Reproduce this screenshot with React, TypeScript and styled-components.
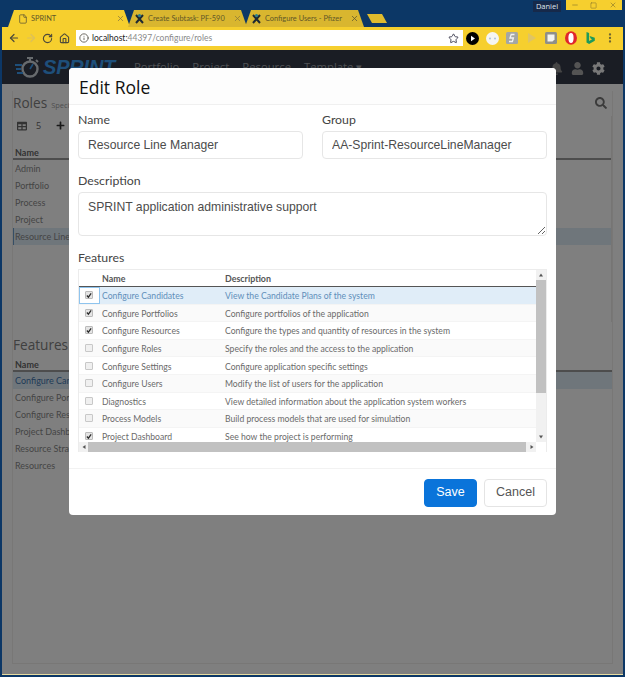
import { Fragment } from "react";
import styled, { createGlobalStyle } from "styled-components";
import {
  ArrowLeft,
  ArrowRight,
  File,
  House,
  Info,
  Minus,
  MoreVertical,
  RotateCw,
  Square,
  Star,
  X,
} from "lucide-react";
import { FaBell, FaCog, FaPlus, FaSearch, FaTable, FaUser } from "react-icons/fa";

const GlobalStyle = createGlobalStyle`
  html, body {
    margin: 0;
    padding: 0;
    background: #0c3766;
  }

  * {
    box-sizing: border-box;
  }
`;

const uiFont = `"Open Sans", "Noto Sans", sans-serif`;
const textFont = `Lato, "Open Sans", sans-serif`;
const formFont = `"Liberation Sans", Arial, sans-serif`;
const yellow = "#f6cf2e";

const Frame = styled.div`
  width: 625px;
  height: 677px;
  padding: 0 2px 2px;
  background: #0c3766;
  display: flex;
  flex-direction: column;
  font-family: ${uiFont};
  overflow: hidden;
`;

const TabStrip = styled.div`
  height: 27px;
  display: flex;
  align-items: flex-end;
  padding-left: 6px;
  flex-shrink: 0;
`;

const Tab = styled.div<{ $active?: boolean }>`
  width: ${({ $active }) => ($active ? 122 : 119)}px;
  height: 17px;
  margin-right: -2px;
  padding: 0 5px 0 ${({ $active }) => ($active ? 10 : 6)}px;
  display: flex;
  align-items: center;
  gap: 3px;
  background: ${({ $active }) => ($active ? yellow : "#d9b62f")};
  color: #625628;
  font-family: ${textFont};
  font-size: 7.4px;
  white-space: nowrap;
  clip-path: polygon(6px 0, calc(100% - 6px) 0, 100% 100%, 0 100%);

  svg {
    flex-shrink: 0;
  }
`;

const TabTitle = styled.span`
  flex: 1;
`;

const NewTab = styled.div`
  width: 20px;
  height: 9px;
  margin: 0 0 4px 5px;
  background: #e0bb2d;
  clip-path: polygon(0 0, 75% 0, 100% 100%, 25% 100%);
`;

const WindowArea = styled.div`
  margin-left: auto;
  align-self: flex-start;
  display: flex;
  gap: 5px;
  align-items: flex-start;
`;

const UserBadge = styled.div`
  width: 28px;
  height: 11px;
  margin-top: 1px;
  background: #16294a;
  color: #dfe4ea;
  font-size: 7.5px;
  line-height: 11px;
  text-align: center;
`;

const WindowButtons = styled.div`
  width: 56px;
  height: 10px;
  margin-right: 1px;
  display: grid;
  grid-template-columns: 1fr 1fr 1fr;
  background: ${yellow};
  color: #8d7a2c;
  place-items: center;
`;

const Toolbar = styled.div`
  height: 23px;
  padding: 3px 0 4px 3px;
  display: flex;
  align-items: center;
  background: ${yellow};
  flex-shrink: 0;
`;

const NavButton = styled.div<{ $faded?: boolean }>`
  width: 17px;
  display: flex;
  justify-content: center;
  color: ${({ $faded }) => ($faded ? "#dcc05a" : "#4d4a3a")};
`;

const Omnibox = styled.div`
  width: 387px;
  height: 16px;
  margin-left: 3px;
  padding: 0 4px 0 3px;
  display: flex;
  align-items: center;
  gap: 3px;
  background: #fff;
  color: #55524a;
  font-family: ${textFont};
  font-size: 8.5px;
`;

const Host = styled.span`
  color: #222;
`;

const UrlRest = styled.span`
  flex: 1;
  color: #8a8a8a;
`;

const Extensions = styled.div`
  display: flex;
  align-items: center;
`;

const Extension = styled.div`
  width: 19.6px;
  display: flex;
  justify-content: center;
  align-items: center;
`;

const AppArea = styled.div`
  position: relative;
  flex: 1;
  display: flex;
  flex-direction: column;
  background: #fff;
  border-bottom: 1px solid #e8dca0;
`;

const AppNav = styled.div`
  height: 34px;
  padding: 0 18px 0 13px;
  display: flex;
  align-items: flex-start;
  background: #343a48;
  flex-shrink: 0;
`;

const Logo = styled.div`
  display: flex;
  align-items: center;
  gap: 3px;
  height: 34px;
  width: 119px;
`;

const LogoText = styled.span`
  font-family: ${formFont};
  font-size: 20px;
  font-weight: 700;
  font-style: italic;
  letter-spacing: -0.2px;
  color: #3c9ef5;
`;

const NavLinks = styled.div`
  display: flex;
  gap: 13px;
  padding-top: 9px;
  color: #9ea2a8;
  font-size: 11.3px;
`;

const NavIcons = styled.div`
  margin-left: auto;
  padding-top: 12px;
  display: flex;
  gap: 8px;
`;

const NavIcon = styled.span<{ $tone: string }>`
  display: flex;
  color: ${({ $tone }) => $tone};
`;

const PageBody = styled.div`
  flex: 1;
  padding: 7px 10px 10px;
  display: flex;
`;

const OuterPanel = styled.div`
  flex: 1;
  border: 1px solid #f0efec;
  border-top: 0;
  color: #8a8a8a;
`;

const PageHeading = styled.div`
  height: 23px;
  display: flex;
  align-items: center;
  gap: 4px;
  color: #808080;
  font-size: 13.6px;
`;

const HeadingNote = styled.span`
  font-size: 7.5px;
  padding-top: 5px;
  color: #a0a0a0;
`;

const SearchMark = styled.span`
  margin-left: auto;
  margin-right: 5px;
  display: flex;
  color: #777;
`;

const GridTools = styled.div`
  height: 19px;
  margin-top: 2px;
  padding-left: 4px;
  display: flex;
  align-items: center;
  gap: 9px;
  color: #666;
  font-size: 9px;
`;

const PlusTool = styled.span`
  display: flex;
  margin-left: 6px;
  color: #333;
`;

const SectionBox = styled.div`
  height: 206px;
  border-right: 1px solid #ecebe8;
`;

const GridHeader = styled.div<{ $height: number }>`
  height: ${({ $height }) => $height}px;
  padding: 0 2px;
  display: flex;
  align-items: flex-end;
  border-bottom: 2px solid #9a9a9a;
  color: #666;
  font-family: ${textFont};
  font-size: 9px;
  font-weight: 700;
`;

const GridRow = styled.div<{ $selected?: boolean; $outlined?: boolean }>`
  height: 17px;
  padding: 0 2px;
  display: flex;
  align-items: center;
  font-family: ${textFont};
  font-size: 9px;
  background: ${({ $selected }) => ($selected ? "#dfecf7" : "transparent")};
  color: ${({ $selected, $outlined }) => ($selected && !$outlined ? "#4176ae" : "#8a8a8a")};
  box-shadow: ${({ $outlined }) => ($outlined ? "inset 1px 0 0 #6c9ccb" : "none")};
`;

const FeaturesHeading = styled(PageHeading)`
  margin-top: 11px;
`;

const Backdrop = styled.div`
  position: absolute;
  inset: 0;
  padding-top: 18px;
  display: flex;
  justify-content: center;
  align-items: flex-start;
  background: rgba(0, 0, 0, 0.5);
`;

const Modal = styled.div`
  width: 487px;
  height: 447px;
  display: flex;
  flex-direction: column;
  background: #fff;
  border-radius: 4px;
`;

const ModalHeader = styled.div`
  height: 37px;
  padding: 1px 10px 0;
  display: flex;
  align-items: center;
  background: #fdfdfd;
  border-bottom: 1px solid #f0f0f0;
  border-radius: 4px 4px 0 0;
  color: #111;
  font-size: 17.5px;
  font-weight: 500;
`;

const ModalBody = styled.div`
  flex: 1;
  padding: 6px 9px 0;
  display: flex;
  flex-direction: column;
  gap: 13px;
`;

const FieldRow = styled.div`
  display: grid;
  grid-template-columns: 225px 225px;
  gap: 19px;
`;

const Field = styled.div`
  display: flex;
  flex-direction: column;
`;

const Label = styled.label`
  height: 18px;
  margin-bottom: 2px;
  color: #444;
  font-family: ${textFont};
  font-size: 12.3px;
  line-height: 18px;
`;

const TextInput = styled.input`
  width: 100%;
  height: 28px;
  padding: 0 9px;
  border: 1px solid #e6e6e6;
  border-radius: 4px;
  outline: none;
  background: #fff;
  color: #4c4c4c;
  font-family: ${formFont};
  font-size: 12.2px;
`;

const TextArea = styled.textarea`
  display: block;
  width: 100%;
  height: 44px;
  padding: 7px 9px;
  border: 1px solid #e6e6e6;
  border-radius: 4px;
  outline: none;
  background: #fff;
  color: #4c4c4c;
  font-family: ${formFont};
  font-size: 12.2px;
  line-height: 15px;
  resize: vertical;
`;

const TableFrame = styled.div`
  height: 183px;
  display: grid;
  grid-template-columns: 1fr 10px;
  grid-template-rows: 172px 10px;
  border: 1px solid #ececec;
`;

const TableViewport = styled.div`
  overflow: hidden;
`;

const FeatureGrid = styled.div`
  display: grid;
  grid-template-columns: 21px 125px 1fr;
`;

const HeaderCell = styled.div<{ $inset?: boolean }>`
  height: 17px;
  padding: 1px 0 0 ${({ $inset }) => ($inset ? 2 : 0)}px;
  display: flex;
  align-items: center;
  border-bottom: 1.5px solid #555;
  color: #555;
  font-family: ${textFont};
  font-size: 8.9px;
  font-weight: 700;
`;

const Cell = styled.div<{ $selected?: boolean; $striped?: boolean; $inset?: boolean }>`
  height: 17.6px;
  padding: 1px 0 0 ${({ $inset }) => ($inset ? 2 : 0)}px;
  display: flex;
  align-items: center;
  border-bottom: 1px solid #f4f4f4;
  background: ${({ $selected, $striped }) => ($selected ? "#e0edf8" : $striped ? "#fafafa" : "#fff")};
  color: ${({ $selected }) => ($selected ? "#5f8fba" : "#6a6a6a")};
  font-family: ${textFont};
  font-size: 8.65px;
  white-space: nowrap;
`;

const CheckCell = styled(Cell)<{ $focused?: boolean }>`
  justify-content: center;
  padding: 0 1px 0 0;
  background: ${({ $focused, $striped }) => ($focused ? "#fff" : $striped ? "#fafafa" : "#fff")};
  box-shadow: ${({ $focused }) => ($focused ? "inset 0 0 0 1px #8fc4ee" : "none")};
`;

const CheckBox = styled.span<{ $checked?: boolean }>`
  width: 8px;
  height: 8px;
  display: flex;
  align-items: center;
  justify-content: center;
  border: 1px solid ${({ $checked }) => ($checked ? "#bbb" : "#c8c8c8")};
  border-radius: 1px;
  background: ${({ $checked }) => ($checked ? "#e4e4e4" : "#f0f0f0")};
`;

const VerticalBar = styled.div`
  display: flex;
  flex-direction: column;
  align-items: stretch;
  background: #f1f1f1;
`;

const ScrollArrow = styled.div`
  height: 10px;
  flex-shrink: 0;
  display: flex;
  align-items: center;
  justify-content: center;
  background: #f1f1f1;
`;

const VerticalThumb = styled.div`
  height: 113px;
  background: #c1c1c1;
`;

const BarSpacer = styled.div`
  flex: 1;
`;

const HorizontalBar = styled.div`
  display: flex;
  align-items: stretch;
  background: #f1f1f1;
`;

const SideArrow = styled(ScrollArrow)`
  width: 9px;
  height: auto;
`;

const HorizontalThumb = styled.div`
  width: 438px;
  background: #c1c1c1;
`;

const Corner = styled.div`
  background: #fff;
`;

const ModalFooter = styled.div`
  margin-top: 16px;
  height: 47px;
  padding: 10px 9px 9px;
  display: flex;
  justify-content: flex-end;
  gap: 7px;
  border-top: 1px solid #f2f2f2;
`;

const Button = styled.button<{ $primary?: boolean }>`
  width: ${({ $primary }) => ($primary ? 53 : 63)}px;
  height: 28px;
  padding: 0 0 2px;
  border: 1px solid ${({ $primary }) => ($primary ? "#0a74da" : "#e4e4e4")};
  border-radius: 4px;
  background: ${({ $primary }) => ($primary ? "#0a74da" : "#fff")};
  color: ${({ $primary }) => ($primary ? "#fff" : "#555")};
  font-family: ${formFont};
  font-size: 12.5px;
`;

const StopWatch = () => (
  <svg width="25" height="25" viewBox="0 0 25 25" fill="none">
    <circle cx="15" cy="14" r="7.5" stroke="#cfd6dc" strokeWidth="2.4" />
    <path d="M12 3h6M15 3v3M21 5l2 2" stroke="#cfd6dc" strokeWidth="2" />
    <path d="M15 14l3-5" stroke="#3c9ef5" strokeWidth="1.6" />
    <path d="M0 10h7M1 14h5M2 18h6" stroke="#3c9ef5" strokeWidth="2" />
  </svg>
);

const CrossedTools = () => (
  <svg width="11" height="11" viewBox="0 0 11 11" fill="none">
    <path d="M2 2l7 8M9 2l-7 8" stroke="#1f2a33" strokeWidth="2" />
    <circle cx="5.5" cy="2.5" r="1.6" fill="#2a7f8f" />
  </svg>
);

const TickMark = () => (
  <svg width="7" height="7" viewBox="0 0 7 7" fill="none">
    <path d="M1 3.5l1.8 2L6 1" stroke="#2c2c2c" strokeWidth="1.5" />
  </svg>
);

const Triangle = ({ rotate }: { rotate: number }) => (
  <svg width="6" height="6" viewBox="0 0 6 6" style={{ transform: `rotate(${rotate}deg)` }}>
    <path d="M1 4.5L3 1.5l2 3z" fill="#555" />
  </svg>
);

const extensionIcons = [
  <svg key="play" width="13" height="13" viewBox="0 0 13 13">
    <circle cx="6.5" cy="6.5" r="6.5" fill="#000" />
    <path d="M5 3.8l4 2.7-4 2.7z" fill="#fff" />
  </svg>,
  <svg key="chat" width="13" height="13" viewBox="0 0 13 13">
    <circle cx="6.5" cy="6.5" r="6.5" fill="#f5f5f2" />
    <circle cx="4" cy="6.5" r="1" fill="#a9c2dc" />
    <circle cx="9" cy="6.5" r="1" fill="#a9c2dc" />
  </svg>,
  <svg key="script" width="12" height="12" viewBox="0 0 12 12">
    <rect width="12" height="12" rx="1.5" fill="#a4a6a4" />
    <path d="M8.5 2.5H5.2L4 6h3.4l-1 3.5H3" stroke="#f2f2f2" strokeWidth="1.3" fill="none" />
  </svg>,
  <svg key="faded" width="11" height="12" viewBox="0 0 11 12">
    <path d="M2 1l8 5-8 5z" fill="#dfc465" />
  </svg>,
  <svg key="note" width="12" height="12" viewBox="0 0 12 12">
    <rect width="12" height="12" rx="1.5" fill="#8f8f88" />
    <path d="M2.5 2.5h7v5l-2 2h-5z" fill="#f4f4f0" />
  </svg>,
  <svg key="opera" width="12" height="14" viewBox="0 0 12 14">
    <ellipse cx="6" cy="7" rx="6" ry="6.8" fill="#e0262c" />
    <ellipse cx="6" cy="7" rx="2.6" ry="5" fill="#fff" />
  </svg>,
  <svg key="bing" width="11" height="14" viewBox="0 0 11 14">
    <path d="M1.5 1l2.6 1v8l3-1.7-1.5-.8-1-2.5 5.2 1.8v3L4.1 13l-2.6-1.4z" fill="#1d9a5b" />
  </svg>,
];

const roleNames = ["Admin", "Portfolio", "Process", "Project", "Resource Line"];
const featureNames = [
  "Configure Candidates",
  "Configure Portfolios",
  "Configure Resources",
  "Project Dashboard",
  "Resource Strategy",
  "Resources",
];

const features = [
  { name: "Configure Candidates", text: "View the Candidate Plans of the system", on: true },
  { name: "Configure Portfolios", text: "Configure portfolios of the application", on: true },
  { name: "Configure Resources", text: "Configure the types and quantity of resources in the system", on: true },
  { name: "Configure Roles", text: "Specify the roles and the access to the application", on: false },
  { name: "Configure Settings", text: "Configure application specific settings", on: false },
  { name: "Configure Users", text: "Modify the list of users for the application", on: false },
  { name: "Diagnostics", text: "View detailed information about the application system workers", on: false },
  { name: "Process Models", text: "Build process models that are used for simulation", on: false },
  { name: "Project Dashboard", text: "See how the project is performing", on: true },
];

const App = () => {
  return (
    <>
      <GlobalStyle />
      <Frame>
        <TabStrip>
          <Tab $active>
            <File size={10} color="#6e6232" />
            <TabTitle>SPRINT</TabTitle>
            <X size={9} color="#8a7a3c" />
          </Tab>
          <Tab>
            <CrossedTools />
            <TabTitle>Create Subtask: PF-590</TabTitle>
            <X size={9} color="#8a7a3c" />
          </Tab>
          <Tab>
            <CrossedTools />
            <TabTitle>Configure Users - Pfizer</TabTitle>
            <X size={9} color="#5d552f" />
          </Tab>
          <NewTab />
          <WindowArea>
            <UserBadge>Daniel</UserBadge>
            <WindowButtons>
              <Minus size={8} />
              <Square size={7} />
              <X size={8} />
            </WindowButtons>
          </WindowArea>
        </TabStrip>

        <Toolbar>
          <NavButton>
            <ArrowLeft size={12} strokeWidth={2.4} />
          </NavButton>
          <NavButton $faded>
            <ArrowRight size={12} strokeWidth={2.4} />
          </NavButton>
          <NavButton>
            <RotateCw size={11} strokeWidth={2.4} />
          </NavButton>
          <NavButton>
            <House size={11} strokeWidth={2.4} />
          </NavButton>
          <Omnibox>
            <Info size={10} />
            <UrlRest>
              <Host>localhost:</Host>44397/configure/roles
            </UrlRest>
            <Star size={11} color="#3c3c50" strokeWidth={2} />
          </Omnibox>
          <Extensions>
            {extensionIcons.map((icon) => (
              <Extension key={icon.key}>{icon}</Extension>
            ))}
            <Extension>
              <MoreVertical size={12} color="#6b6333" strokeWidth={2.6} />
            </Extension>
          </Extensions>
        </Toolbar>

        <AppArea>
          <AppNav>
            <Logo>
              <StopWatch />
              <LogoText>SPRINT</LogoText>
            </Logo>
            <NavLinks>
              <span>Portfolio</span>
              <span>Project</span>
              <span>Resource</span>
              <span>Template ▾</span>
            </NavLinks>
            <NavIcons>
              <NavIcon $tone="#8a8a8a">
                <FaBell size={13} />
              </NavIcon>
              <NavIcon $tone="#a8a8a8">
                <FaUser size={13} />
              </NavIcon>
              <NavIcon $tone="#f0f0f0">
                <FaCog size={13} />
              </NavIcon>
            </NavIcons>
          </AppNav>

          <PageBody>
            <OuterPanel>
              <PageHeading>
                Roles <HeadingNote>Specify</HeadingNote>
                <SearchMark>
                  <FaSearch size={12} />
                </SearchMark>
              </PageHeading>
              <SectionBox>
                <GridTools>
                  <FaTable size={10} />
                  <span>5</span>
                  <PlusTool>
                    <FaPlus size={9} />
                  </PlusTool>
                </GridTools>
                <GridHeader $height={25}>Name</GridHeader>
                {roleNames.map((name) => (
                  <GridRow key={name} $selected={name === "Resource Line"} $outlined={name === "Resource Line"}>
                    {name}
                  </GridRow>
                ))}
              </SectionBox>
              <FeaturesHeading>Features</FeaturesHeading>
              <GridHeader $height={16}>Name</GridHeader>
              {featureNames.map((name, index) => (
                <GridRow key={name} $selected={index === 0}>
                  {name}
                </GridRow>
              ))}
            </OuterPanel>
          </PageBody>

          <Backdrop>
            <Modal>
              <ModalHeader>Edit Role</ModalHeader>
              <ModalBody>
                <FieldRow>
                  <Field>
                    <Label htmlFor="role-name">Name</Label>
                    <TextInput id="role-name" defaultValue="Resource Line Manager" />
                  </Field>
                  <Field>
                    <Label htmlFor="role-group">Group</Label>
                    <TextInput id="role-group" defaultValue="AA-Sprint-ResourceLineManager" />
                  </Field>
                </FieldRow>
                <Field>
                  <Label htmlFor="role-description">Description</Label>
                  <TextArea id="role-description" defaultValue="SPRINT application administrative support" />
                </Field>
                <Field>
                  <Label>Features</Label>
                  <TableFrame>
                    <TableViewport>
                      <FeatureGrid>
                        <HeaderCell />
                        <HeaderCell $inset>Name</HeaderCell>
                        <HeaderCell>Description</HeaderCell>
                        {features.map((feature, index) => (
                          <Fragment key={feature.name}>
                            <CheckCell $focused={index === 0} $striped={index % 2 === 1}>
                              <CheckBox $checked={feature.on}>{feature.on && <TickMark />}</CheckBox>
                            </CheckCell>
                            <Cell $inset $selected={index === 0} $striped={index % 2 === 1}>
                              {feature.name}
                            </Cell>
                            <Cell $selected={index === 0} $striped={index % 2 === 1}>
                              {feature.text}
                            </Cell>
                          </Fragment>
                        ))}
                      </FeatureGrid>
                    </TableViewport>
                    <VerticalBar>
                      <ScrollArrow>
                        <Triangle rotate={0} />
                      </ScrollArrow>
                      <VerticalThumb />
                      <BarSpacer />
                      <ScrollArrow>
                        <Triangle rotate={180} />
                      </ScrollArrow>
                    </VerticalBar>
                    <HorizontalBar>
                      <SideArrow>
                        <Triangle rotate={270} />
                      </SideArrow>
                      <HorizontalThumb />
                      <BarSpacer />
                      <SideArrow>
                        <Triangle rotate={90} />
                      </SideArrow>
                    </HorizontalBar>
                    <Corner />
                  </TableFrame>
                </Field>
              </ModalBody>
              <ModalFooter>
                <Button $primary>Save</Button>
                <Button>Cancel</Button>
              </ModalFooter>
            </Modal>
          </Backdrop>
        </AppArea>
      </Frame>
    </>
  );
};

export default App;
